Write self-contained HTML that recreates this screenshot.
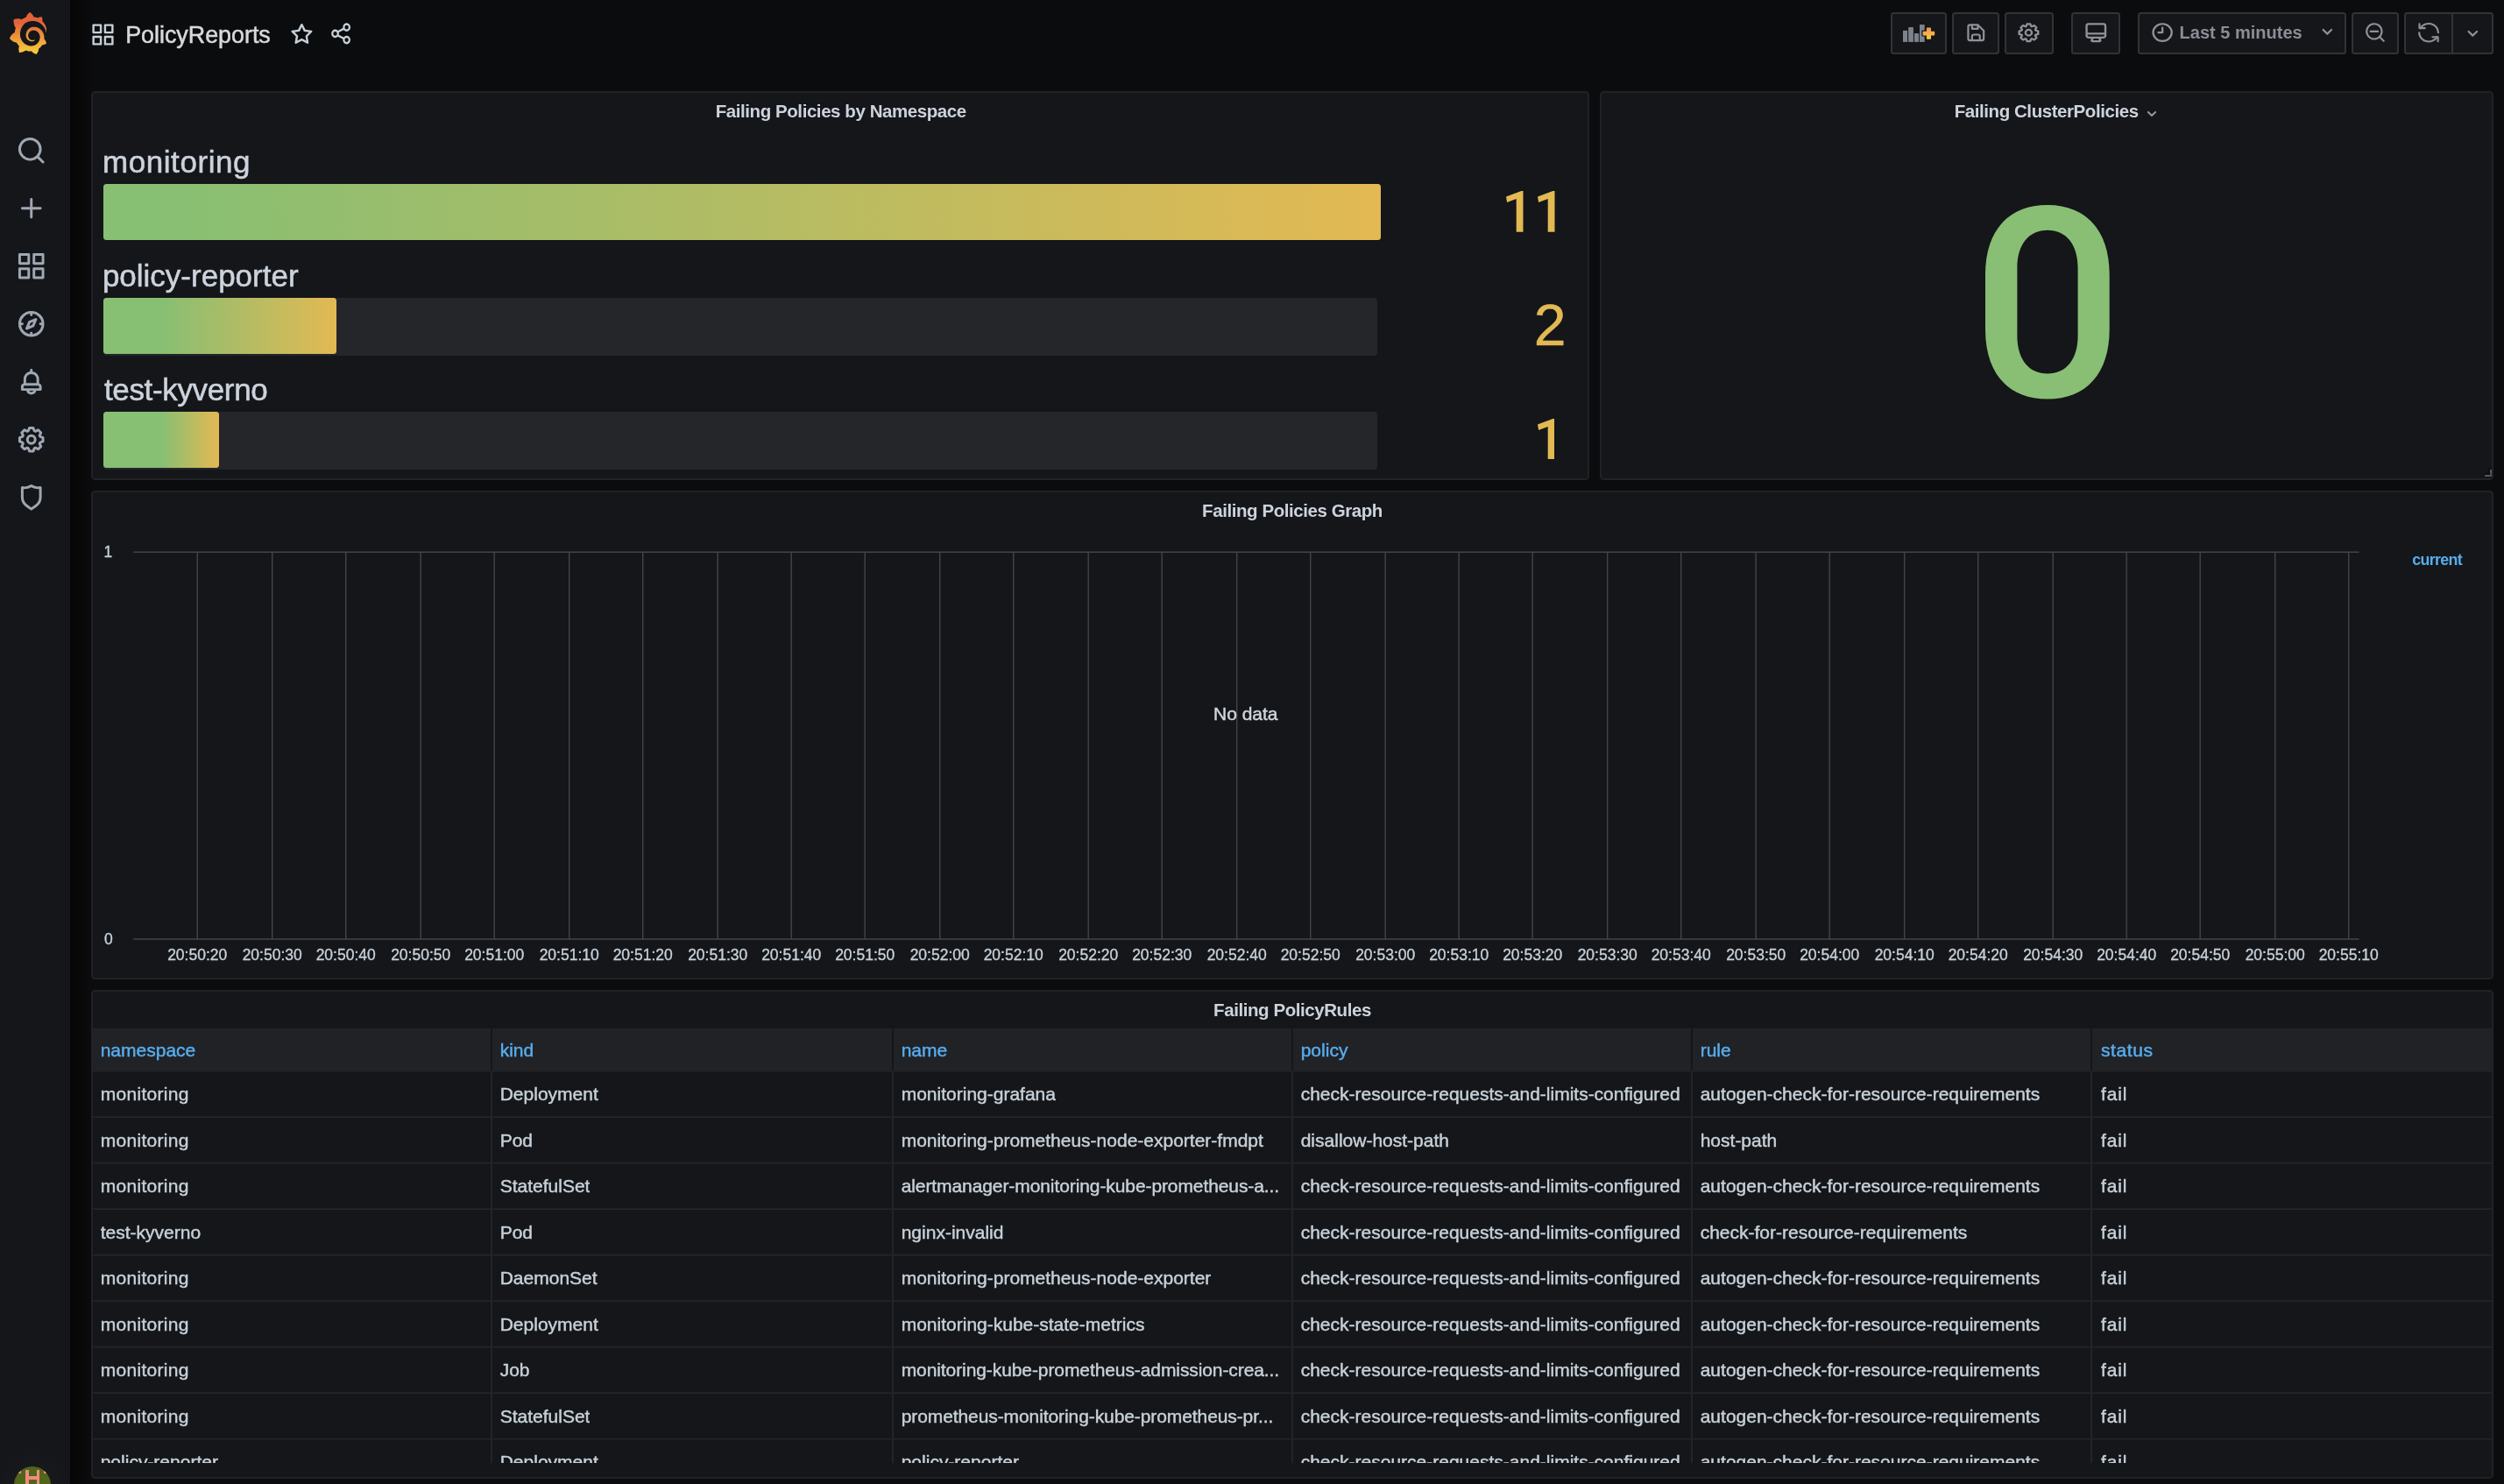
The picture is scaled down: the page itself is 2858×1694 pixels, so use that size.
<!DOCTYPE html>
<html><head><meta charset="utf-8"><title>PolicyReports - Grafana</title>
<style>
*{box-sizing:border-box;margin:0;padding:0}
html,body{width:2858px;height:1694px;overflow:hidden;background:#0b0c0e;font-family:"Liberation Sans",sans-serif;color:#c7d0d9}
#root{position:absolute;left:0;top:0;width:2858px;height:1694px;overflow:hidden;will-change:transform}
.abs{position:absolute}
#side{position:absolute;left:0;top:0;width:80px;height:1694px;background:#141619}
#shadow{position:absolute;left:80px;top:0;width:28px;height:1694px;background:linear-gradient(90deg,#050506 0%,#070708 30%,#0a0a0c 65%,#0b0c0e 100%)}
.panel{position:absolute;background:#141619;border:2px solid #202226;border-radius:4.5px;overflow:hidden}
.ptitle{position:absolute;text-align:center;font-weight:700;color:#cdd3dc;white-space:nowrap;line-height:24px}
.tbtn{position:absolute;top:14px;height:48px;background:#141619;border:2px solid #323337;border-radius:3.5px}
.t{position:absolute;white-space:nowrap}

.pt{font-size:20.5px;letter-spacing:-0.43px}
.bl{position:absolute;-webkit-text-stroke:0.55px #ccd3dc;font-size:35px;line-height:44px;color:#ccd3dc;white-space:nowrap}
.bbg{position:absolute;height:66px;background:#25262a;border-radius:4px}
.bar{position:absolute;height:64px;border-radius:3.5px}
.bv{position:absolute;font-size:66px;line-height:70px;color:#e2b953;-webkit-text-stroke:0.5px #e2b953;white-space:nowrap;text-align:right;width:200px}
.ax{position:absolute;-webkit-text-stroke:0.35px #c7d0d9;font-size:17.5px;line-height:20px;color:#c7d0d9;white-space:nowrap}
.th{position:absolute;-webkit-text-stroke:0.45px #58adee;font-size:21px;line-height:26px;color:#58adee;white-space:nowrap}
.td{position:absolute;-webkit-text-stroke:0.45px #c7d0d9;font-size:21px;line-height:26px;color:#c7d0d9;white-space:nowrap;overflow:hidden}
</style></head><body>
<div id="root">
<div id="side"></div>
<div id="shadow"></div>
<svg class="abs" style="left:10.7px;top:13.9px;width:42.5px;height:47.9px" viewBox="8.5 1 334 363" preserveAspectRatio="none"><defs><linearGradient id="lg" gradientUnits="userSpaceOnUse" x1="175.5" y1="400" x2="175.5" y2="90"><stop offset="0" stop-color="#fce03a"/><stop offset="1" stop-color="#e2623a"/></linearGradient></defs><path fill="url(#lg)" d="M342,161.2c-0.600-6.100-1.600-13.100-3.600-20.900c-2-7.700-5-16.200-9.400-25c-4.400-8.800-10.100-17.900-17.500-26.800c-2.900-3.500-6.100-6.900-9.500-10.200c5.100-20.300-6.200-37.900-6.200-37.900c-19.500-1.200-31.900,6.100-36.500,9.400c-0.800-0.300-1.500-0.700-2.300-1c-3.300-1.300-6.700-2.600-10.300-3.700c-3.500-1.100-7.100-2.100-10.800-3c-3.700-0.900-7.400-1.600-11.200-2.200c-0.700-0.100-1.300-0.200-2-0.300c-8.500-27.200-32.900-38.600-32.900-38.600c-27.300,17.300-32.400,41.500-32.400,41.500s-0.100,0.500-0.300,1.400c-1.500,0.400-3,0.900-4.500,1.300c-2.100,0.600-4.200,1.400-6.200,2.200c-2.100,0.800-4.100,1.600-6.200,2.500c-4.100,1.800-8.200,3.800-12.200,6c-3.900,2.200-7.700,4.600-11.400,7.100c-0.500-0.200-1-0.400-1-0.400c-37.800-14.400-71.300,2.900-71.300,2.900c-3.100,40.200,15.100,65.500,18.700,70.100c-0.900,2.500-1.700,5-2.500,7.500c-2.800,9.100-4.900,18.400-6.200,28.100c-0.200,1.400-0.400,2.800-0.500,4.200C18.800,192.700,8.500,228,8.500,228c29.100,33.500,63.100,35.600,63.100,35.600c0,0,0.100-0.100,0.100-0.100c4.300,7.700,9.300,15,14.900,21.900c2.400,2.900,4.800,5.600,7.400,8.300c-10.600,30.400,1.500,55.600,1.500,55.600c32.400,1.200,53.700-14.200,58.200-17.700c3.200,1.100,6.500,2.100,9.800,2.900c10,2.600,20.200,4.100,30.400,4.500c2.500,0.100,5.100,0.200,7.600,0.100l1.200,0l0.800,0l1.600,0l1.600-0.100l0,0.100c15.300,21.800,42.100,24.900,42.100,24.900c19.100-20.100,20.200-40.100,20.200-44.400l0,0c0,0,0-0.100,0-0.300c0-0.400,0-0.600,0-0.600l0,0c0-0.300,0-0.600,0-0.900c4-2.800,7.800-5.800,11.400-9.100c7.600-6.900,14.300-14.800,19.900-23.300c0.500-0.800,1-1.600,1.500-2.400c21.600,1.200,36.900-13.400,36.900-13.400c-3.600-22.500-16.400-33.500-19.100-35.600l0,0c0,0-0.100-0.100-0.300-0.200c-0.200-0.100-0.200-0.200-0.200-0.200c0,0,0,0,0,0c-0.100-0.100-0.300-0.200-0.500-0.300c0.100-1.400,0.200-2.700,0.300-4.100c0.200-2.400,0.200-4.900,0.200-7.300l0-1.800l0-0.900l0-0.500c0-0.600,0-0.400,0-0.600l-0.100-1.500l-0.100-2c0-0.700-0.100-1.300-0.200-1.900c-0.100-0.600-0.100-1.300-0.200-1.900l-0.200-1.900l-0.300-1.900c-0.400-2.500-0.800-4.900-1.400-7.400c-2.300-9.700-6.100-18.900-11-27.200c-5-8.300-11.200-15.600-18.300-21.800c-7-6.200-14.900-11.200-23.100-14.900c-8.300-3.700-16.900-6.100-25.500-7.200c-4.300-0.600-8.600-0.800-12.900-0.700l-1.600,0l-0.400,0c-0.100,0-0.600,0-0.500,0l-0.700,0l-1.600,0.100c-0.600,0-1.200,0.100-1.700,0.100c-2.200,0.200-4.400,0.500-6.500,0.900c-8.600,1.600-16.700,4.700-23.800,9c-7.100,4.300-13.300,9.600-18.300,15.600c-5,6-8.900,12.700-11.600,19.600c-2.700,6.900-4.200,14.100-4.600,21c-0.100,1.700-0.100,3.500-0.100,5.200c0,0.400,0,0.900,0,1.300l0.100,1.400c0.100,0.800,0.100,1.700,0.200,2.500c0.300,3.500,1,6.900,1.900,10.100c1.900,6.500,4.900,12.400,8.600,17.400c3.700,5,8.200,9.100,12.900,12.400c4.700,3.200,9.800,5.500,14.800,7c5,1.500,10,2.100,14.700,2.100c0.600,0,1.200,0,1.700,0c0.300,0,0.600,0,0.900,0c0.300,0,0.600,0,0.900-0.100c0.500,0,1-0.100,1.500-0.100c0.100,0,0.300,0,0.400-0.100l0.500-0.100c0.300,0,0.600-0.100,0.900-0.100c0.600-0.100,1.100-0.200,1.700-0.300c0.600-0.100,1.100-0.200,1.600-0.400c1.100-0.200,2.100-0.600,3.100-0.900c2-0.700,4-1.500,5.700-2.400c1.800-0.900,3.400-2,5-3c0.400-0.300,0.900-0.600,1.300-1c1.600-1.300,1.900-3.700,0.600-5.300c-1.100-1.400-3.100-1.800-4.700-0.900c-0.400,0.200-0.800,0.400-1.200,0.600c-1.400,0.700-2.800,1.300-4.300,1.800c-1.500,0.500-3.100,0.900-4.700,1.200c-0.800,0.100-1.600,0.200-2.500,0.300c-0.400,0-0.800,0.100-1.300,0.100c-0.400,0-0.900,0-1.200,0c-0.400,0-0.800,0-1.200,0c-0.500,0-1,0-1.500-0.100c0,0-0.300,0-0.100,0l-0.200,0l-0.300,0c-0.200,0-0.500,0-0.700-0.100c-0.500-0.100-0.900-0.100-1.400-0.200c-3.700-0.500-7.400-1.600-10.900-3.200c-3.600-1.600-7-3.800-10.100-6.600c-3.100-2.800-5.800-6.100-7.900-9.900c-2.100-3.800-3.600-8-4.300-12.400c-0.300-2.200-0.500-4.500-0.400-6.700c0-0.600,0.100-1.200,0.100-1.800c0,0.200,0-0.100,0-0.100l0-0.200l0-0.500c0-0.300,0.100-0.600,0.100-0.900c0.100-1.200,0.300-2.400,0.500-3.600c1.700-9.600,6.500-19,13.900-26.100c1.900-1.800,3.900-3.400,6-4.900c2.100-1.500,4.400-2.800,6.800-3.900c2.400-1.100,4.800-2,7.400-2.700c2.500-0.700,5.100-1.100,7.800-1.400c1.300-0.100,2.600-0.200,4-0.200c0.400,0,0.600,0,0.900,0l1.100,0l0.700,0c0.300,0,0,0,0.100,0l0.300,0l1.100,0.100c2.900,0.200,5.700,0.600,8.500,1.300c5.600,1.200,11.100,3.300,16.200,6.100c10.200,5.700,18.900,14.500,24.200,25.100c2.700,5.300,4.600,11,5.500,16.900c0.200,1.500,0.400,3,0.500,4.500l0.100,1.100l0.100,1.100c0,0.400,0,0.800,0,1.100c0,0.400,0,0.800,0,1.100l0,1l0,1.100c0,0.700-0.100,1.900-0.100,2.600c-0.100,1.600-0.300,3.300-0.500,4.900c-0.200,1.600-0.500,3.200-0.800,4.800c-0.300,1.600-0.700,3.200-1.100,4.700c-0.800,3.100-1.800,6.200-3,9.300c-2.400,6-5.600,11.800-9.400,17.100c-7.700,10.600-18.200,19.200-30.200,24.700c-6,2.700-12.300,4.700-18.800,5.700c-3.200,0.600-6.500,0.900-9.800,1l-0.600,0l-0.500,0l-1.100,0l-1.600,0l-0.800,0c0.400,0-0.100,0-0.100,0l-0.300,0c-1.800,0-3.500-0.100-5.300-0.300c-7-0.500-13.900-1.800-20.700-3.700c-6.700-1.900-13.200-4.600-19.400-7.800c-12.300-6.600-23.400-15.600-32-26.500c-4.300-5.400-8.100-11.300-11.200-17.400c-3.100-6.100-5.600-12.600-7.400-19.100c-1.800-6.600-2.900-13.300-3.400-20.100l-0.100-1.300l0-0.300l0-0.300l0-0.600l0-1.100l0-0.300l0-0.400l0-0.800l0-1.600l0-0.300c0,0,0,0.100,0-0.100l0-0.600c0-0.800,0-1.700,0-2.500c0.100-3.300,0.400-6.800,0.800-10.200c0.400-3.400,1-6.900,1.700-10.300c0.700-3.400,1.500-6.800,2.500-10.200c1.900-6.700,4.300-13.200,7.100-19.300c5.700-12.200,13.100-23.100,22-31.800c2.200-2.200,4.500-4.200,6.900-6.200c2.400-1.900,4.900-3.700,7.500-5.400c2.500-1.700,5.200-3.200,7.900-4.600c1.300-0.700,2.700-1.400,4.100-2c0.700-0.300,1.400-0.600,2.100-0.900c0.700-0.300,1.400-0.600,2.100-0.900c2.800-1.200,5.700-2.200,8.700-3.100c0.700-0.200,1.500-0.400,2.200-0.700c0.700-0.200,1.500-0.400,2.200-0.600c1.500-0.400,3-0.800,4.500-1.100c0.700-0.200,1.500-0.300,2.300-0.500c0.800-0.200,1.500-0.300,2.300-0.500c0.800-0.100,1.500-0.300,2.300-0.400l1.100-0.200l1.200-0.200c0.800-0.100,1.500-0.200,2.300-0.300c0.900-0.100,1.700-0.200,2.600-0.300c0.700-0.100,1.900-0.200,2.600-0.300c0.500-0.100,1.100-0.100,1.600-0.200l1.100-0.100l0.500-0.100l0.600,0c0.900-0.100,1.700-0.100,2.600-0.200l1.300-0.100c0,0,0.500,0,0.100,0l0.300,0l0.600,0c0.700,0,1.500-0.100,2.200-0.100c2.900-0.100,5.900-0.100,8.800,0c5.800,0.200,11.500,0.900,17,1.900c11.100,2.100,21.500,5.600,31,10.300c9.500,4.600,17.900,10.300,25.300,16.500c0.500,0.400,0.900,0.800,1.400,1.200c0.400,0.400,0.900,0.800,1.300,1.200c0.900,0.800,1.700,1.600,2.600,2.400c0.900,0.800,1.700,1.600,2.500,2.400c0.800,0.800,1.600,1.600,2.400,2.500c3.100,3.300,6,6.600,8.600,10c5.200,6.700,9.400,13.500,12.700,19.900c0.200,0.400,0.400,0.800,0.600,1.200c0.200,0.400,0.400,0.800,0.600,1.200c0.400,0.800,0.800,1.600,1.100,2.400c0.400,0.800,0.700,1.500,1.100,2.300c0.300,0.800,0.700,1.500,1,2.300c1.200,3,2.400,5.900,3.300,8.600c1.500,4.400,2.600,8.300,3.500,11.700c0.300,1.400,1.600,2.300,3,2.100c1.500-0.100,2.600-1.300,2.600-2.800C342.600,170.400,342.500,166.100,342,161.200z"/></svg>
<svg class="abs" style="left:18.25px;top:153.85px;width:35.5px;height:35.5px" viewBox="0 0 24 24"><path fill="#9fa7b3" d="M21.71,20.29,18,16.61A9,9,0,1,0,16.61,18l3.68,3.68a1,1,0,0,0,1.42,0A1,1,0,0,0,21.71,20.29ZM11,18a7,7,0,1,1,7-7A7,7,0,0,1,11,18Z"/></svg>
<svg class="abs" style="left:18.25px;top:220.25px;width:35.5px;height:35.5px" viewBox="0 0 24 24"><path fill="#9fa7b3" d="M19,11H13V5a1,1,0,0,0-2,0v6H5a1,1,0,0,0,0,2h6v6a1,1,0,0,0,2,0V13h6a1,1,0,0,0,0-2Z"/></svg>
<svg class="abs" style="left:18.25px;top:286.25px;width:35.5px;height:35.5px" viewBox="0 0 24 24"><path fill="#9fa7b3" d="M10,13H3a1,1,0,0,0-1,1v7a1,1,0,0,0,1,1h7a1,1,0,0,0,1-1V14A1,1,0,0,0,10,13ZM9,20H4V15H9ZM21,2H14a1,1,0,0,0-1,1v7a1,1,0,0,0,1,1h7a1,1,0,0,0,1-1V3A1,1,0,0,0,21,2ZM20,9H15V4h5Zm1,4H14a1,1,0,0,0-1,1v7a1,1,0,0,0,1,1h7a1,1,0,0,0,1-1V14A1,1,0,0,0,21,13Zm-1,7H15V15h5ZM10,2H3A1,1,0,0,0,2,3v7a1,1,0,0,0,1,1h7a1,1,0,0,0,1-1V3A1,1,0,0,0,10,2ZM9,9H4V4H9Z"/></svg>
<svg class="abs" style="left:18.25px;top:352.25px;width:35.5px;height:35.5px" viewBox="0 0 24 24"><path fill="#9fa7b3" d="M12,2A10,10,0,1,0,22,12,10,10,0,0,0,12,2Zm1,17.93V19a1,1,0,0,0-2,0v.93A8,8,0,0,1,4.07,13H5a1,1,0,0,0,0-2H4.07A8,8,0,0,1,11,4.07V5a1,1,0,0,0,2,0V4.07A8,8,0,0,1,19.93,11H19a1,1,0,0,0,0,2h.93A8,8,0,0,1,13,19.93ZM15.14,7.55l-5,2.12a1,1,0,0,0-.52.52l-2.12,5a1,1,0,0,0,.21,1.1,1,1,0,0,0,.7.29.93.93,0,0,0,.4-.08l5-2.12a1,1,0,0,0,.52-.52l2.12-5a1,1,0,0,0-1.31-1.31Zm-2.49,5.1-2.28,1,1-2.28,2.28-1Z"/></svg>
<svg class="abs" style="left:18.25px;top:418.25px;width:35.5px;height:35.5px" viewBox="0 0 24 24"><path fill="#9fa7b3" d="M18,13.18V10a6,6,0,0,0-5-5.910V3a1,1,0,0,0-2,0V4.090A6,6,0,0,0,6,10v3.180A3,3,0,0,0,4,16v2a1,1,0,0,0,1,1H8.140a4,4,0,0,0,7.720,0H19a1,1,0,0,0,1-1V16A3,3,0,0,0,18,13.180ZM8,10a4,4,0,0,1,8,0v3H8Zm4,10a2,2,0,0,1-1.720-1h3.440A2,2,0,0,1,12,20Zm6-3H6V16a1,1,0,0,1,1-1H17a1,1,0,0,1,1,1Z"/></svg>
<svg class="abs" style="left:18.25px;top:484.25px;width:35.5px;height:35.5px" viewBox="0 0 24 24"><path fill="#9fa7b3" d="M21.32,9.55l-1.89-.63.89-1.780A1,1,0,0,0,20.130,6L18,3.870a1,1,0,0,0-1.150-.19l-1.780.89-.63-1.890A1,1,0,0,0,13.500,2h-3a1,1,0,0,0-.95.680L8.920,4.570,7.140,3.680A1,1,0,0,0,6,3.870L3.870,6a1,1,0,0,0-.19,1.150l.89,1.780-1.890.63A1,1,0,0,0,2,10.500v3a1,1,0,0,0,.68.950l1.890.63-.89,1.780A1,1,0,0,0,3.870,18L6,20.130a1,1,0,0,0,1.150.19l1.780-.89.63,1.890a1,1,0,0,0,.95.680h3a1,1,0,0,0,.95-.680l.63-1.890,1.780.89A1,1,0,0,0,18,20.130L20.130,18a1,1,0,0,0,.19-1.150l-.89-1.780,1.890-.63A1,1,0,0,0,22,13.500v-3A1,1,0,0,0,21.320,9.550ZM20,12.780l-1.200.4A2,2,0,0,0,17.640,16l.57,1.140-1.100,1.100L16,17.640a2,2,0,0,0-2.790,1.160l-.4,1.200H11.220l-.4-1.200A2,2,0,0,0,8,17.640l-1.140.57-1.100-1.100L6.360,16A2,2,0,0,0,5.200,13.180L4,12.780V11.220l1.200-.4A2,2,0,0,0,6.360,8L5.790,6.890l1.100-1.100L8,6.360A2,2,0,0,0,10.820,5.200l.4-1.200h1.560l.4,1.200A2,2,0,0,0,16,6.360l1.140-.57,1.100,1.100L17.640,8a2,2,0,0,0,1.160,2.790l1.200.4ZM12,8a4,4,0,1,0,4,4A4,4,0,0,0,12,8Zm0,6a2,2,0,1,1,2-2A2,2,0,0,1,12,14Z"/></svg>
<svg class="abs" style="left:18.25px;top:550.25px;width:35.5px;height:35.5px" viewBox="0 0 24 24"><path fill="#9fa7b3" d="M19.63,3.65a1,1,0,0,0-.84-.2,8,8,0,0,1-6.220-1.270,1,1,0,0,0-1.140,0A8,8,0,0,1,5.210,3.450a1,1,0,0,0-.84.2A1,1,0,0,0,4,4.430v7.450a9,9,0,0,0,3.770,7.330l3.650,2.600a1,1,0,0,0,1.160,0l3.650-2.600A9,9,0,0,0,20,11.880V4.430A1,1,0,0,0,19.630,3.650ZM18,11.880a7,7,0,0,1-2.930,5.700L12,19.770,8.930,17.580A7,7,0,0,1,6,11.880V5.580a10,10,0,0,0,6-1.390,10,10,0,0,0,6,1.390Z"/></svg>
<div class="abs" style="left:-4px;top:1650px;width:84px;height:44px;background:radial-gradient(ellipse 42px 44px at 41px 46px,#1b1d22 0%,#16181c 60%,#141619 100%)"></div>
<div class="abs" style="left:16px;top:1673.8px;width:42px;height:42px;border-radius:50%;background:#4f661b;overflow:hidden">
<div class="abs" style="left:13px;top:4.5px;width:3.6px;height:30px;background:#f08c7d"></div>
<div class="abs" style="left:25.9px;top:4.5px;width:3.6px;height:30px;background:#f08c7d"></div>
<div class="abs" style="left:13px;top:11.5px;width:16px;height:4.2px;background:#f08c7d"></div>
<div class="abs" style="left:4.6px;top:5.2px;width:3.6px;height:3.4px;background:#f08c7d"></div>
<div class="abs" style="left:33.8px;top:5.2px;width:3.6px;height:3.4px;background:#f08c7d"></div>
</div>
<svg class="abs" style="left:103.40px;top:25.40px;width:29px;height:29px" viewBox="0 0 24 24"><path fill="#c7d0d9" d="M10,13H3a1,1,0,0,0-1,1v7a1,1,0,0,0,1,1h7a1,1,0,0,0,1-1V14A1,1,0,0,0,10,13ZM9,20H4V15H9ZM21,2H14a1,1,0,0,0-1,1v7a1,1,0,0,0,1,1h7a1,1,0,0,0,1-1V3A1,1,0,0,0,21,2ZM20,9H15V4h5Zm1,4H14a1,1,0,0,0-1,1v7a1,1,0,0,0,1,1h7a1,1,0,0,0,1-1V14A1,1,0,0,0,21,13Zm-1,7H15V15h5ZM10,2H3A1,1,0,0,0,2,3v7a1,1,0,0,0,1,1h7a1,1,0,0,0,1-1V3A1,1,0,0,0,10,2ZM9,9H4V4H9Z"/></svg>
<div class="t" id="dtitle" style="left:143.2px;top:22px;font-size:26.85px;line-height:36px;color:#d8d9da;-webkit-text-stroke:0.5px #d8d9da">PolicyReports</div>
<svg class="abs" style="left:329.60px;top:24.20px;width:28.8px;height:28.8px" viewBox="0 0 24 24"><path fill="#c7d0d9" d="M22,9.67A1,1,0,0,0,21.14,9l-5.69-.83L12.9,3a1,1,0,0,0-1.8,0L8.55,8.160,2.860,9a1,1,0,0,0-.81.680,1,1,0,0,0,.25,1l4.130,4-1,5.680A1,1,0,0,0,6.900,21.440L12,18.770l5.100,2.670a.93.93,0,0,0,.46.120,1,1,0,0,0,.59-.19,1,1,0,0,0,.4-1l-1-5.680,4.130-4A1,1,0,0,0,22,9.670Zm-6.150,4a1,1,0,0,0-.29.880l.72,4.200-3.760-2a1.060,1.060,0,0,0-.94,0l-3.760,2,.72-4.200a1,1,0,0,0-.29-.880l-3-3,4.210-.61a1,1,0,0,0,.76-.55L12,5.700l1.880,3.820a1,1,0,0,0,.76.550l4.210.61Z"/></svg>
<svg class="abs" style="left:376.10px;top:23.60px;width:26.2px;height:28.8px" viewBox="0 0 24 24" preserveAspectRatio="none"><path fill="#c7d0d9" d="M18,14a4,4,0,0,0-3.080,1.480l-5.100-2.350a3.640,3.640,0,0,0,0-2.260l5.100-2.350A4,4,0,1,0,14,6a4.170,4.170,0,0,0,.07.710L8.790,9.140a4,4,0,1,0,0,5.720l5.280,2.430A4.170,4.170,0,0,0,14,18a4,4,0,1,0,4-4ZM18,4a2,2,0,1,1-2,2A2,2,0,0,1,18,4ZM6,14a2,2,0,1,1,2-2A2,2,0,0,1,6,14Zm12,6a2,2,0,1,1,2-2A2,2,0,0,1,18,20Z"/></svg>
<div class="tbtn" style="left:2158px;width:64.0px"></div>
<div class="tbtn" style="left:2228px;width:54.0px"></div>
<div class="tbtn" style="left:2288px;width:56.0px"></div>
<div class="tbtn" style="left:2364px;width:56.0px"></div>
<div class="tbtn" style="left:2440px;width:238.0px"></div>
<div class="tbtn" style="left:2684px;width:54.0px"></div>
<div class="tbtn" style="left:2744px;width:102.0px"></div>
<div class="abs" style="left:2798px;top:14px;width:2px;height:48px;background:#323337"></div>
<svg class="abs" style="left:2170px;top:24px;width:42px;height:28px" viewBox="0 0 42 28"><defs><linearGradient id="pg" gradientUnits="userSpaceOnUse" x1="0" y1="7.5" x2="0" y2="20.7"><stop offset="0" stop-color="#ee9450"/><stop offset="1" stop-color="#fbcb3c"/></linearGradient></defs>
<g fill="#7e828c"><rect x="2" y="10.9" width="5.1" height="13"/><rect x="8.2" y="7.1" width="5.7" height="16.8"/><rect x="15" y="14.1" width="5.1" height="9.8"/><rect x="21" y="4.1" width="5.7" height="19.8"/></g>
<g fill="#141619"><rect x="23.4" y="10.6" width="16" height="7" rx="1"/><rect x="27.700" y="6.300" width="7.500" height="15.600" rx="1"/></g>
<g fill="url(#pg)"><rect x="24.6" y="11.8" width="13.6" height="4.600" rx=".6"/><rect x="28.900" y="7.500" width="5.100" height="13.200" rx=".6"/></g></svg>
<svg class="abs" style="left:2241.70px;top:23.70px;width:26.6px;height:26.6px" viewBox="0 0 24 24"><path fill="#8e9199" d="M20.71,9.29l-6-6a1,1,0,0,0-.32-.21A1.090,1.090,0,0,0,14,3H6A3,3,0,0,0,3,6V18a3,3,0,0,0,3,3H18a3,3,0,0,0,3-3V10A1,1,0,0,0,20.710,9.290ZM9,5h4V7H9Zm6,14H9V16a1,1,0,0,1,1-1h4a1,1,0,0,1,1,1Zm4-1a1,1,0,0,1-1,1H17V16a3,3,0,0,0-3-3H10a3,3,0,0,0-3,3v3H6a1,1,0,0,1-1-1V6A1,1,0,0,1,6,5H7V8A1,1,0,0,0,8,9h6a1,1,0,0,0,1-1V6.410l4,4Z"/></svg>
<svg class="abs" style="left:2301.45px;top:23.75px;width:28.9px;height:26.5px" viewBox="0 0 24 24" preserveAspectRatio="none"><path fill="#8e9199" d="M21.32,9.55l-1.89-.63.89-1.780A1,1,0,0,0,20.130,6L18,3.870a1,1,0,0,0-1.150-.19l-1.780.89-.63-1.890A1,1,0,0,0,13.500,2h-3a1,1,0,0,0-.95.680L8.920,4.570,7.140,3.680A1,1,0,0,0,6,3.870L3.870,6a1,1,0,0,0-.19,1.150l.89,1.780-1.890.63A1,1,0,0,0,2,10.500v3a1,1,0,0,0,.68.950l1.890.63-.89,1.780A1,1,0,0,0,3.870,18L6,20.130a1,1,0,0,0,1.150.19l1.780-.89.63,1.890a1,1,0,0,0,.95.680h3a1,1,0,0,0,.95-.680l.63-1.890,1.780.89A1,1,0,0,0,18,20.130L20.130,18a1,1,0,0,0,.19-1.150l-.89-1.780,1.890-.63A1,1,0,0,0,22,13.500v-3A1,1,0,0,0,21.320,9.550ZM20,12.780l-1.200.4A2,2,0,0,0,17.640,16l.57,1.140-1.100,1.100L16,17.640a2,2,0,0,0-2.790,1.160l-.4,1.200H11.220l-.4-1.200A2,2,0,0,0,8,17.640l-1.140.57-1.100-1.100L6.360,16A2,2,0,0,0,5.200,13.180L4,12.780V11.220l1.200-.4A2,2,0,0,0,6.360,8L5.790,6.890l1.100-1.100L8,6.360A2,2,0,0,0,10.820,5.200l.4-1.200h1.560l.4,1.200A2,2,0,0,0,16,6.360l1.140-.57,1.100,1.100L17.640,8a2,2,0,0,0,1.160,2.790l1.200.4ZM12,8a4,4,0,1,0,4,4A4,4,0,0,0,12,8Zm0,6a2,2,0,1,1,2-2A2,2,0,0,1,12,14Z"/></svg>
<svg class="abs" style="left:2377.70px;top:23.75px;width:28.6px;height:26.5px" viewBox="0 0 24 24" preserveAspectRatio="none"><path fill="#8e9199" d="M19,2H5A3,3,0,0,0,2,5V15a3,3,0,0,0,3,3H7.640l-.58,1a2,2,0,0,0,0,2,2,2,0,0,0,1.750,1h6.460A2,2,0,0,0,17,21a2,2,0,0,0,0-2l-.59-1H19a3,3,0,0,0,3-3V5A3,3,0,0,0,19,2ZM8.770,20,10,18H14l1.200,2ZM20,15a1,1,0,0,1-1,1H5a1,1,0,0,1-1-1V14H20Zm0-3H4V5A1,1,0,0,1,5,4H19a1,1,0,0,1,1,1Z"/></svg>
<svg class="abs" style="left:2453.65px;top:23.70px;width:28.3px;height:26.2px" viewBox="0 0 24 24" preserveAspectRatio="none"><path fill="#8e9199" d="M12,2A10,10,0,1,0,22,12,10.010,10.010,0,0,0,12,2Zm0,18a8,8,0,1,1,8-8A8.010,8.010,0,0,1,12,20ZM12,6a1,1,0,0,0-1,1v4H8a1,1,0,0,0,0,2h4a1,1,0,0,0,1-1V7A1,1,0,0,0,12,6Z"/></svg>
<div class="t" id="trange" style="left:2487.6px;top:22px;font-size:20px;font-weight:700;line-height:30px;color:#8b8e96">Last 5 minutes</div>
<svg class="abs" style="left:2643.00px;top:23.20px;width:26.6px;height:26.6px" viewBox="0 0 24 24"><path fill="#8e9199" d="M17,9.17a1,1,0,0,0-1.410,0L12,12.710,8.460,9.170a1,1,0,0,0-1.410,0,1,1,0,0,0,0,1.420l4.240,4.240a1,1,0,0,0,1.420,0L17,10.590A1,1,0,0,0,17,9.170Z"/></svg>
<svg class="abs" style="left:2697.75px;top:24.05px;width:25.9px;height:25.9px" viewBox="0 0 24 24"><path fill="#8e9199" d="M15,10H7a1,1,0,0,0,0,2h8a1,1,0,0,0,0-2Zm6.710,10.290L18,16.610A9,9,0,1,0,16.610,18l3.680,3.680a1,1,0,0,0,1.420,0A1,1,0,0,0,21.710,20.290ZM11,18a7,7,0,1,1,7-7A7,7,0,0,1,11,18Z"/></svg>
<svg class="abs" style="left:2758.9px;top:24.800px;width:26.100px;height:24.400px" viewBox="0 0 24 24" preserveAspectRatio="none" fill="none" stroke="#8e9199" stroke-width="2" stroke-linecap="round" stroke-linejoin="round"><path d="M2.300 2.200V7H8"/><path d="M3.300 7A10 10 0 0 1 22 12"/><path d="M21.700 21.800V17H16"/><path d="M20.700 17A10 10 0 0 1 2 12"/></svg>
<svg class="abs" style="left:2808.90px;top:25.20px;width:26.6px;height:26.6px" viewBox="0 0 24 24"><path fill="#8e9199" d="M17,9.17a1,1,0,0,0-1.410,0L12,12.710,8.460,9.170a1,1,0,0,0-1.410,0,1,1,0,0,0,0,1.420l4.240,4.240a1,1,0,0,0,1.420,0L17,10.590A1,1,0,0,0,17,9.170Z"/></svg>
<div class="panel" id="p1" style="left:104px;top:104px;width:1710.0px;height:444.0px">
<div class="ptitle pt" style="left:0;width:1706px;top:9.4px;padding-left:1.5px">Failing Policies by Namespace</div>
<div class="bl" style="top:57.0px;left:10.9px;letter-spacing:0.58px">monitoring</div>
<div class="bar" style="top:104.0px;left:11.9px;width:1458.2px;background:linear-gradient(90deg,#87bf73,#87bf73 66px,#e3b953)"></div>
<div class="bl" style="top:187.0px;left:10.9px;letter-spacing:0px">policy-reporter</div>
<div class="bbg" style="top:234.0px;left:11.9px;width:1454.0px"></div>
<div class="bar" style="top:234.0px;left:11.9px;width:265.9px;background:linear-gradient(90deg,#87bf73,#87bf73 66px,#e3b953)"></div>
<div class="bl" style="top:317.0px;left:12.9px;letter-spacing:-0.34px">test-kyverno</div>
<div class="bbg" style="top:364.0px;left:11.9px;width:1454.0px"></div>
<div class="bar" style="top:364.0px;left:11.9px;width:132.0px;background:linear-gradient(90deg,#87bf73,#87bf73 66px,#e3b953)"></div>
<svg class="abs" style="left:1613.0px;top:111.8px;width:19.5px;height:46.8px" viewBox="0 0 19.5 46.8"><polygon points="19.5,0 17.4,0 0,6.5 1.1,12.9 11.7,9.1 11.7,46.8 19.5,46.8" fill="#e2b953"/></svg>
<svg class="abs" style="left:1649.2px;top:111.8px;width:19.5px;height:46.8px" viewBox="0 0 19.5 46.8"><polygon points="19.5,0 17.4,0 0,6.5 1.1,12.9 11.7,9.1 11.7,46.8 19.5,46.8" fill="#e2b953"/></svg>
<div class="bv" style="top:230.0px;left:1481.5px">2</div>
<svg class="abs" style="left:1648.5px;top:371.7px;width:19.5px;height:46.8px" viewBox="0 0 19.5 46.8"><polygon points="19.5,0 17.4,0 0,6.5 1.1,12.9 11.7,9.1 11.7,46.8 19.5,46.8" fill="#e2b953"/></svg>
</div>
<div class="panel" id="p2" style="left:1826px;top:104px;width:1020.0px;height:444.0px">
<div class="ptitle pt" style="left:402.7px;top:9.4px;text-align:left">Failing ClusterPolicies</div>
<svg class="abs" style="left:621.0px;top:18.0px;width:14px;height:12px" viewBox="0 0 14 12" fill="none" stroke="#8e939c" stroke-width="2.1" stroke-linecap="round" stroke-linejoin="round"><path d="M2.9 3.900l4.100 4.100l4.100-4.100"/></svg>
<svg class="abs" style="left:438.4px;top:127.6px;width:141.7px;height:221.5px;overflow:visible" viewBox="0 0 141.7 221.5"><path fill-rule="evenodd" fill="#88bf74" d="M0.00,79.60C0.00,29.45 26.21,0.00 70.85,0.00C115.49,0.00 141.70,29.45 141.70,79.60V141.90C141.70,192.05 115.49,221.50 70.85,221.50C26.21,221.50 0.00,192.05 0.00,141.90ZM36.40,72.00C36.40,45.15 49.55,28.70 71.00,28.70C92.45,28.70 105.60,45.15 105.60,72.00V149.20C105.60,176.05 92.45,192.50 71.00,192.50C49.55,192.50 36.40,176.05 36.40,149.20Z"/></svg>
<div class="abs" style="left:1014px;top:430px;width:2px;height:8px;background:#585858;box-shadow:-1px -1px 2px rgba(0,0,0,.6)"></div><div class="abs" style="left:1008px;top:436px;width:8px;height:2px;background:#585858;box-shadow:-1px -1px 2px rgba(0,0,0,.6)"></div>
</div>
<div class="panel" id="p3" style="left:104px;top:560px;width:2742.0px;height:558.0px">
<div class="ptitle pt" style="left:0;width:2738px;top:9.4px">Failing Policies Graph</div>
<svg class="abs" style="left:0;top:0;width:2738px;height:554px" viewBox="106 562 2738 554"><g stroke="#434448" stroke-width="1.4" fill="none"><path d="M152.2 630.3H2692.6M152.2 1072.0H2692.6"/><path d="M225.2 630.3V1072.0M310.7 630.3V1072.0M394.7 630.3V1072.0M480.2 630.3V1072.0M564.2 630.3V1072.0M649.7 630.3V1072.0M733.7 630.3V1072.0M819.2 630.3V1072.0M903.2 630.3V1072.0M987.2 630.3V1072.0M1072.7 630.3V1072.0M1156.7 630.3V1072.0M1242.2 630.3V1072.0M1326.2 630.3V1072.0M1411.7 630.3V1072.0M1495.7 630.3V1072.0M1581.2 630.3V1072.0M1665.2 630.3V1072.0M1749.2 630.3V1072.0M1834.7 630.3V1072.0M1918.7 630.3V1072.0M2004.2 630.3V1072.0M2088.2 630.3V1072.0M2173.7 630.3V1072.0M2257.7 630.3V1072.0M2343.2 630.3V1072.0M2427.2 630.3V1072.0M2511.2 630.3V1072.0M2596.7 630.3V1072.0M2680.7 630.3V1072.0"/></g></svg>
<div class="ax" style="left:69.2px;width:100px;text-align:center;top:518.0px">20:50:20</div>
<div class="ax" style="left:154.7px;width:100px;text-align:center;top:518.0px">20:50:30</div>
<div class="ax" style="left:238.7px;width:100px;text-align:center;top:518.0px">20:50:40</div>
<div class="ax" style="left:324.2px;width:100px;text-align:center;top:518.0px">20:50:50</div>
<div class="ax" style="left:408.2px;width:100px;text-align:center;top:518.0px">20:51:00</div>
<div class="ax" style="left:493.7px;width:100px;text-align:center;top:518.0px">20:51:10</div>
<div class="ax" style="left:577.7px;width:100px;text-align:center;top:518.0px">20:51:20</div>
<div class="ax" style="left:663.2px;width:100px;text-align:center;top:518.0px">20:51:30</div>
<div class="ax" style="left:747.2px;width:100px;text-align:center;top:518.0px">20:51:40</div>
<div class="ax" style="left:831.2px;width:100px;text-align:center;top:518.0px">20:51:50</div>
<div class="ax" style="left:916.7px;width:100px;text-align:center;top:518.0px">20:52:00</div>
<div class="ax" style="left:1000.7px;width:100px;text-align:center;top:518.0px">20:52:10</div>
<div class="ax" style="left:1086.2px;width:100px;text-align:center;top:518.0px">20:52:20</div>
<div class="ax" style="left:1170.2px;width:100px;text-align:center;top:518.0px">20:52:30</div>
<div class="ax" style="left:1255.7px;width:100px;text-align:center;top:518.0px">20:52:40</div>
<div class="ax" style="left:1339.7px;width:100px;text-align:center;top:518.0px">20:52:50</div>
<div class="ax" style="left:1425.2px;width:100px;text-align:center;top:518.0px">20:53:00</div>
<div class="ax" style="left:1509.2px;width:100px;text-align:center;top:518.0px">20:53:10</div>
<div class="ax" style="left:1593.2px;width:100px;text-align:center;top:518.0px">20:53:20</div>
<div class="ax" style="left:1678.7px;width:100px;text-align:center;top:518.0px">20:53:30</div>
<div class="ax" style="left:1762.7px;width:100px;text-align:center;top:518.0px">20:53:40</div>
<div class="ax" style="left:1848.2px;width:100px;text-align:center;top:518.0px">20:53:50</div>
<div class="ax" style="left:1932.2px;width:100px;text-align:center;top:518.0px">20:54:00</div>
<div class="ax" style="left:2017.7px;width:100px;text-align:center;top:518.0px">20:54:10</div>
<div class="ax" style="left:2101.7px;width:100px;text-align:center;top:518.0px">20:54:20</div>
<div class="ax" style="left:2187.2px;width:100px;text-align:center;top:518.0px">20:54:30</div>
<div class="ax" style="left:2271.2px;width:100px;text-align:center;top:518.0px">20:54:40</div>
<div class="ax" style="left:2355.2px;width:100px;text-align:center;top:518.0px">20:54:50</div>
<div class="ax" style="left:2440.7px;width:100px;text-align:center;top:518.0px">20:55:00</div>
<div class="ax" style="left:2524.7px;width:100px;text-align:center;top:518.0px">20:55:10</div>
<div class="ax" style="left:12.5px;top:58.0px">1</div>
<div class="ax" style="left:13.0px;top:500.0px">0</div>
<div class="abs" style="left:1279.0px;top:239.7px;font-size:21px;line-height:26px;color:#d0d5dc;-webkit-text-stroke:0.45px #d0d5dc;white-space:nowrap">No data</div>
<div class="abs" style="left:2647.2px;top:65.7px;font-size:17.8px;font-weight:700;line-height:22px;color:#58adee;white-space:nowrap;letter-spacing:-0.65px">current</div>
</div>
<div class="panel" id="p4" style="left:104px;top:1130px;width:2742.0px;height:558.0px">
<div class="ptitle pt" style="left:0;width:2738px;top:9.4px">Failing PolicyRules</div>
<svg class="abs" style="left:0;top:0;width:2738px;height:554px" viewBox="106 1132 2738 554"><rect x="106" y="1173.7" width="2738" height="49.8" fill="#202226"/><rect x="560" y="1173.7" width="2" height="48.0" fill="#141619"/><rect x="560.05" y="1223.5" width="1.9" height="446.7" fill="#23252a"/><rect x="1018" y="1173.7" width="2" height="48.0" fill="#141619"/><rect x="1018.05" y="1223.5" width="1.9" height="446.7" fill="#23252a"/><rect x="1474" y="1173.7" width="2" height="48.0" fill="#141619"/><rect x="1474.05" y="1223.5" width="1.9" height="446.7" fill="#23252a"/><rect x="1930" y="1173.7" width="2" height="48.0" fill="#141619"/><rect x="1930.05" y="1223.5" width="1.9" height="446.7" fill="#23252a"/><rect x="2386" y="1173.7" width="2" height="48.0" fill="#141619"/><rect x="2386.05" y="1223.5" width="1.9" height="446.7" fill="#23252a"/><rect x="106" y="1274.25" width="2738" height="1.8" fill="#23252a"/><rect x="106" y="1326.75" width="2738" height="1.8" fill="#23252a"/><rect x="106" y="1379.25" width="2738" height="1.8" fill="#23252a"/><rect x="106" y="1431.75" width="2738" height="1.8" fill="#23252a"/><rect x="106" y="1484.25" width="2738" height="1.8" fill="#23252a"/><rect x="106" y="1536.75" width="2738" height="1.8" fill="#23252a"/><rect x="106" y="1589.25" width="2738" height="1.8" fill="#23252a"/><rect x="106" y="1641.75" width="2738" height="1.8" fill="#23252a"/></svg>
<div class="abs" style="left:0;top:91.5px;width:2738px;height:446.7px;overflow:hidden">
<div class="td" style="left:8.7px;top:12.9px;letter-spacing:0.3px">monitoring</div>
<div class="td" style="left:464.7px;top:12.9px">Deployment</div>
<div class="td" style="left:922.7px;top:12.9px">monitoring-grafana</div>
<div class="td" style="left:1378.7px;top:12.9px">check-resource-requests-and-limits-configured</div>
<div class="td" style="left:1834.7px;top:12.9px">autogen-check-for-resource-requirements</div>
<div class="td" style="left:2291.9px;top:12.9px;letter-spacing:0.9px">fail</div>
<div class="td" style="left:8.7px;top:65.4px;letter-spacing:0.3px">monitoring</div>
<div class="td" style="left:464.7px;top:65.4px">Pod</div>
<div class="td" style="left:922.7px;top:65.4px">monitoring-prometheus-node-exporter-fmdpt</div>
<div class="td" style="left:1378.7px;top:65.4px">disallow-host-path</div>
<div class="td" style="left:1834.7px;top:65.4px">host-path</div>
<div class="td" style="left:2291.9px;top:65.4px;letter-spacing:0.9px">fail</div>
<div class="td" style="left:8.7px;top:117.9px;letter-spacing:0.3px">monitoring</div>
<div class="td" style="left:464.7px;top:117.9px">StatefulSet</div>
<div class="td" style="left:922.7px;top:117.9px;letter-spacing:-0.09px">alertmanager-monitoring-kube-prometheus-a...</div>
<div class="td" style="left:1378.7px;top:117.9px">check-resource-requests-and-limits-configured</div>
<div class="td" style="left:1834.7px;top:117.9px">autogen-check-for-resource-requirements</div>
<div class="td" style="left:2291.9px;top:117.9px;letter-spacing:0.9px">fail</div>
<div class="td" style="left:8.7px;top:170.4px">test-kyverno</div>
<div class="td" style="left:464.7px;top:170.4px">Pod</div>
<div class="td" style="left:922.7px;top:170.4px">nginx-invalid</div>
<div class="td" style="left:1378.7px;top:170.4px">check-resource-requests-and-limits-configured</div>
<div class="td" style="left:1834.7px;top:170.4px">check-for-resource-requirements</div>
<div class="td" style="left:2291.9px;top:170.4px;letter-spacing:0.9px">fail</div>
<div class="td" style="left:8.7px;top:222.9px;letter-spacing:0.3px">monitoring</div>
<div class="td" style="left:464.7px;top:222.9px">DaemonSet</div>
<div class="td" style="left:922.7px;top:222.9px">monitoring-prometheus-node-exporter</div>
<div class="td" style="left:1378.7px;top:222.9px">check-resource-requests-and-limits-configured</div>
<div class="td" style="left:1834.7px;top:222.9px">autogen-check-for-resource-requirements</div>
<div class="td" style="left:2291.9px;top:222.9px;letter-spacing:0.9px">fail</div>
<div class="td" style="left:8.7px;top:275.4px;letter-spacing:0.3px">monitoring</div>
<div class="td" style="left:464.7px;top:275.4px">Deployment</div>
<div class="td" style="left:922.7px;top:275.4px">monitoring-kube-state-metrics</div>
<div class="td" style="left:1378.7px;top:275.4px">check-resource-requests-and-limits-configured</div>
<div class="td" style="left:1834.7px;top:275.4px">autogen-check-for-resource-requirements</div>
<div class="td" style="left:2291.9px;top:275.4px;letter-spacing:0.9px">fail</div>
<div class="td" style="left:8.7px;top:327.9px;letter-spacing:0.3px">monitoring</div>
<div class="td" style="left:464.7px;top:327.9px">Job</div>
<div class="td" style="left:922.7px;top:327.9px;letter-spacing:-0.09px">monitoring-kube-prometheus-admission-crea...</div>
<div class="td" style="left:1378.7px;top:327.9px">check-resource-requests-and-limits-configured</div>
<div class="td" style="left:1834.7px;top:327.9px">autogen-check-for-resource-requirements</div>
<div class="td" style="left:2291.9px;top:327.9px;letter-spacing:0.9px">fail</div>
<div class="td" style="left:8.7px;top:380.4px;letter-spacing:0.3px">monitoring</div>
<div class="td" style="left:464.7px;top:380.4px">StatefulSet</div>
<div class="td" style="left:922.7px;top:380.4px;letter-spacing:-0.09px">prometheus-monitoring-kube-prometheus-pr...</div>
<div class="td" style="left:1378.7px;top:380.4px">check-resource-requests-and-limits-configured</div>
<div class="td" style="left:1834.7px;top:380.4px">autogen-check-for-resource-requirements</div>
<div class="td" style="left:2291.9px;top:380.4px;letter-spacing:0.9px">fail</div>
<div class="td" style="left:8.7px;top:432.9px">policy-reporter</div>
<div class="td" style="left:464.7px;top:432.9px">Deployment</div>
<div class="td" style="left:922.7px;top:432.9px">policy-reporter</div>
<div class="td" style="left:1378.7px;top:432.9px">check-resource-requests-and-limits-configured</div>
<div class="td" style="left:1834.7px;top:432.9px">autogen-check-for-resource-requirements</div>
<div class="td" style="left:2291.9px;top:432.9px;letter-spacing:0.9px">fail</div>
</div>
<div class="th" style="left:8.7px;top:53.7px">namespace</div>
<div class="th" style="left:464.7px;top:53.7px">kind</div>
<div class="th" style="left:922.7px;top:53.7px">name</div>
<div class="th" style="left:1378.7px;top:53.7px">policy</div>
<div class="th" style="left:1834.7px;top:53.7px">rule</div>
<div class="th" style="left:2291.9px;top:53.7px;letter-spacing:0.6px">status</div>
</div>
</div>
</body></html>
